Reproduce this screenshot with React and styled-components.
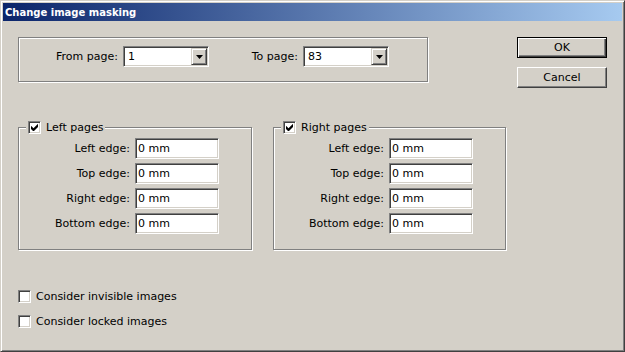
import React from 'react';
import styled, { createGlobalStyle } from 'styled-components';

const GlobalStyle = createGlobalStyle`
  html, body {
    margin: 0;
    padding: 0;
    background: #d4d0c8;
  }
  body {
    font-family: "DejaVu Sans", "Liberation Sans", sans-serif;
    font-size: 11px;
    color: #000;
  }
`;

const FACE = '#d4d0c8';

const sunken = `
  border: 1px solid;
  border-color: #808080 #fff #fff #808080;
  box-shadow: inset 1px 1px 0 #404040, inset -1px -1px 0 ${FACE};
`;

const raised = `
  border: 1px solid;
  border-color: ${FACE} #404040 #404040 ${FACE};
  box-shadow: inset 1px 1px 0 #fff, inset -1px -1px 0 #808080;
`;

const etched = `
  border: 1px solid #808080;
  box-shadow: 1px 1px 0 #fff, inset 1px 1px 0 #fff;
`;

const edgeFields = ['Left edge:', 'Top edge:', 'Right edge:', 'Bottom edge:'];

const CheckMark = () => (
  <svg width="7" height="7" viewBox="0 0 7 7">
    <path d="M0 2v3l2 2h1l4-4V0h-0.2L2.5 4.3 0.2 2z" fill="#000" />
  </svg>
);

const Arrow = () => (
  <svg width="7" height="4" viewBox="0 0 7 4">
    <polygon points="0,0 7,0 3.5,4" fill="#000" />
  </svg>
);

const Combo = ({ value }) => (
  <ComboBox>
    <ComboText>{value}</ComboText>
    <DropButton>
      <Arrow />
    </DropButton>
  </ComboBox>
);

const Check = ({ checked }) => <CheckBox>{checked && <CheckMark />}</CheckBox>;

const EdgeGroup = ({ title, width, labelWidth }) => (
  <Group $width={width}>
    <Legend>
      <Check checked />
      <span>{title}</span>
    </Legend>
    <FieldGrid $labelWidth={labelWidth}>
      {edgeFields.map((label) => (
        <React.Fragment key={label}>
          <FieldLabel>{label}</FieldLabel>
          <TextInput readOnly value="0 mm" />
        </React.Fragment>
      ))}
    </FieldGrid>
  </Group>
);

export default function App() {
  return (
    <>
      <GlobalStyle />
      <Window>
        <TitleBar>Change image masking</TitleBar>
        <Content>
          <TopRow>
            <PageGroup>
              <PageLabel $width={99}>From page:</PageLabel>
              <Combo value="1" />
              <PageLabel $width={89}>To page:</PageLabel>
              <Combo value="83" />
            </PageGroup>
            <ButtonColumn>
              <Button $default>OK</Button>
              <Button>Cancel</Button>
            </ButtonColumn>
          </TopRow>
          <EdgeRow>
            <EdgeGroup title="Left pages" width={234} labelWidth={111} />
            <EdgeGroup title="Right pages" width={233} labelWidth={110} />
          </EdgeRow>
          <OptionList>
            <CheckRow>
              <Check />
              <span>Consider invisible images</span>
            </CheckRow>
            <CheckRow>
              <Check />
              <span>Consider locked images</span>
            </CheckRow>
          </OptionList>
        </Content>
      </Window>
    </>
  );
}

const Window = styled.div`
  width: 625px;
  height: 352px;
  box-sizing: border-box;
  background: ${FACE};
  border: 1px solid;
  border-color: ${FACE} #404040 #404040 ${FACE};
  box-shadow: inset 1px 1px 0 #fff, inset -1px -1px 0 #808080;
  padding: 2px;
  display: flex;
  flex-direction: column;
  overflow: hidden;
`;

const TitleBar = styled.div`
  height: 18px;
  flex: none;
  display: flex;
  align-items: center;
  padding-left: 2px;
  background: linear-gradient(to right, #0a246a, #a6caf0);
  color: #fff;
  font-weight: bold;
  font-size: 10px;
`;

const Content = styled.div`
  padding: 16px 0 0 15px;
`;

const TopRow = styled.div`
  display: flex;
  align-items: flex-start;
`;

const PageGroup = styled.div`
  width: 410px;
  height: 45px;
  box-sizing: border-box;
  ${etched}
  display: flex;
  align-items: flex-start;
  padding-top: 8px;
`;

const PageLabel = styled.span`
  width: ${(p) => p.$width}px;
  margin-right: 5px;
  text-align: right;
  line-height: 21px;
`;

const ComboBox = styled.div`
  width: 86px;
  height: 21px;
  box-sizing: border-box;
  background: #fff;
  ${sunken}
  display: flex;
  padding: 1px;
`;

const ComboText = styled.span`
  flex: 1;
  padding-left: 3px;
  line-height: 17px;
`;

const DropButton = styled.div`
  width: 16px;
  height: 17px;
  box-sizing: border-box;
  background: ${FACE};
  ${raised}
  display: flex;
  align-items: center;
  justify-content: center;
`;

const ButtonColumn = styled.div`
  margin-left: 89px;
  display: flex;
  flex-direction: column;
  gap: 9px;
`;

const Button = styled.button`
  width: 90px;
  height: 21px;
  box-sizing: border-box;
  padding: 0;
  background: ${FACE};
  font: inherit;
  color: #000;
  ${(p) =>
    p.$default
      ? `
    border: 1px solid #000;
    box-shadow: inset 1px 1px 0 #fff, inset -1px -1px 0 #404040, inset -2px -2px 0 #808080;
  `
      : `
    border: 1px solid;
    border-color: #fff #404040 #404040 #fff;
    box-shadow: inset -1px -1px 0 #808080;
  `}
`;

const EdgeRow = styled.div`
  display: flex;
  gap: 21px;
  margin-top: 39px;
`;

const Group = styled.div`
  width: ${(p) => p.$width}px;
  box-sizing: border-box;
  ${etched}
  padding-bottom: 15px;
  display: flex;
  flex-direction: column;
`;

const Legend = styled.div`
  align-self: flex-start;
  display: flex;
  align-items: center;
  gap: 5px;
  height: 13px;
  margin: -7px 0 0 7px;
  padding: 0 2px;
  background: ${FACE};
  line-height: 13px;
`;

const FieldGrid = styled.div`
  display: grid;
  grid-template-columns: ${(p) => p.$labelWidth}px 84px;
  column-gap: 5px;
  row-gap: 4px;
  margin-top: 4px;
`;

const FieldLabel = styled.span`
  text-align: right;
  line-height: 21px;
`;

const TextInput = styled.input`
  width: 84px;
  height: 21px;
  box-sizing: border-box;
  margin: 0;
  padding: 0 0 0 2px;
  background: #fff;
  ${sunken}
  font: inherit;
  color: #000;
  outline: none;
`;

const CheckBox = styled.span`
  width: 13px;
  height: 13px;
  flex: none;
  box-sizing: border-box;
  background: #fff;
  ${sunken}
  display: flex;
  align-items: center;
  justify-content: center;
`;

const OptionList = styled.div`
  margin-top: 40px;
  display: flex;
  flex-direction: column;
  gap: 12px;
`;

const CheckRow = styled.div`
  display: flex;
  align-items: center;
  gap: 5px;
  height: 13px;
`;
